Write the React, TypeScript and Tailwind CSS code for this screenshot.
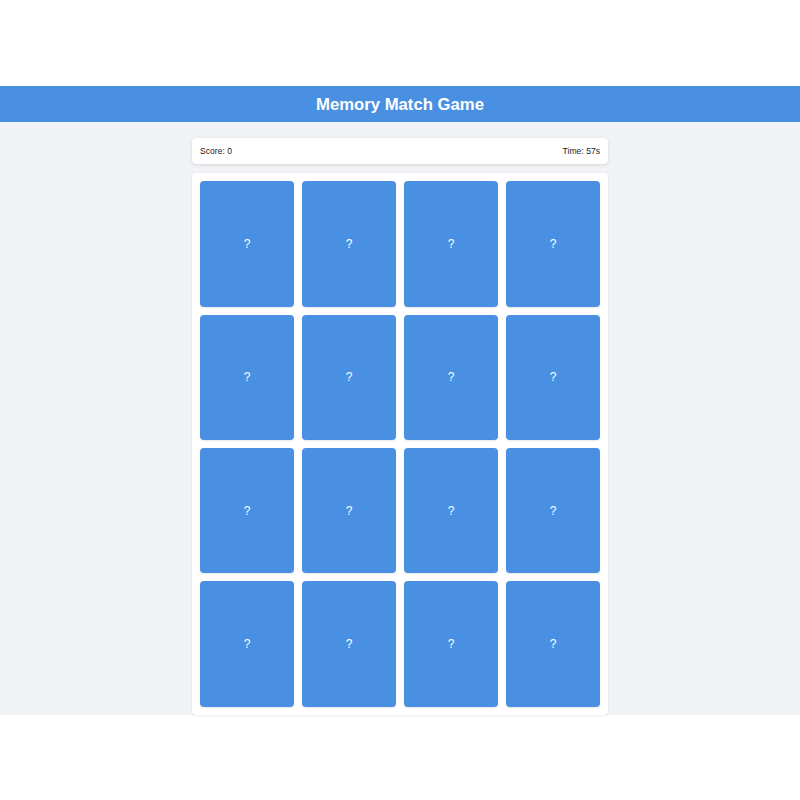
const cards = Array.from({ length: 16 }, (_, i) => i);

export default function App() {
  return (
    <div
      className="flex min-h-screen flex-col justify-center bg-white"
      style={{ fontFamily: '"Liberation Sans", Arial, sans-serif' }}
    >
      <header className="mt-[1px] flex h-9 items-center justify-center bg-[#4a90e2]">
        <h1 className="text-[16.7px] font-bold text-white">Memory Match Game</h1>
      </header>

      <main className="bg-[#f0f2f5] pt-4">
        <div className="mx-auto flex w-[416px] flex-col gap-[9px]">
          <div className="flex h-[26px] items-center justify-between rounded bg-white px-2 text-[8.6px] font-normal text-[#222] shadow-[0_1px_3px_rgba(0,0,0,0.12)]">
            <span>Score: 0</span>
            <span>Time: 57s</span>
          </div>

          <div className="grid grid-cols-4 gap-2 rounded bg-white p-2 shadow-[0_1px_3px_rgba(0,0,0,0.08)]">
            {cards.map((c) => (
              <button
                key={c}
                className="flex aspect-[3/4] items-center justify-center rounded bg-[#4a90e2] text-[12px] text-white shadow-[0_1px_2px_rgba(0,0,0,0.1)]"
              >
                ?
              </button>
            ))}
          </div>
        </div>
      </main>
    </div>
  );
}
